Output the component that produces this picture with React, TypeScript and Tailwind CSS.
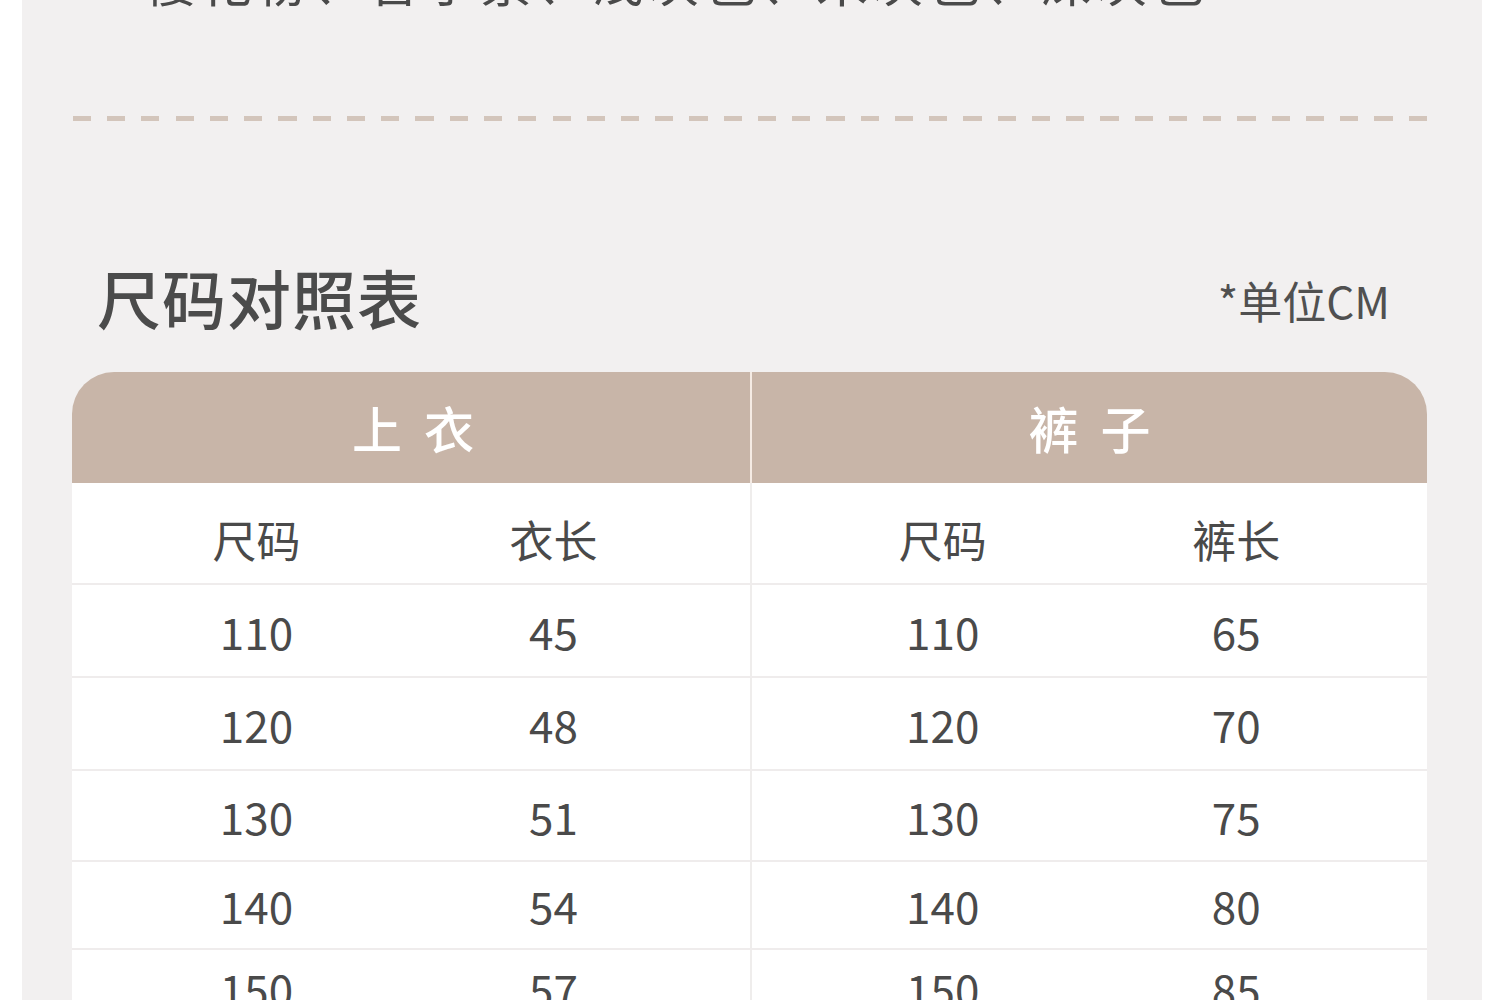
const tops = [
  { size: '110', len: '45' },
  { size: '120', len: '48' },
  { size: '130', len: '51' },
  { size: '140', len: '54' },
  { size: '150', len: '57' },
]
const pants = ['65', '70', '75', '80', '85']
const rowHeights = ['h-[93px]', 'h-[93px]', 'h-[91px]', 'h-[88px]', 'h-[78px]']

const font = { fontFamily: '"Noto Sans CJK SC", "Noto Sans", sans-serif' }

export default function App() {
  return (
    <div className="w-[1500px] h-[1000px] bg-white overflow-hidden" style={font}>
      <div className="mx-[22px] w-[1460px] h-full bg-[#f2f0f0] overflow-hidden">
        {/* cut-off colour line from the section above */}
        <div className="-mt-[50px] pl-[122px] text-[52px] leading-[60px] text-[#4a4a4a] tracking-[4px] whitespace-nowrap">
          樱花粉、香芋紫、浅灰色、米灰色、深灰色
        </div>

        {/* dashed divider */}
        <div className="mt-[106px] ml-[51px] mr-[55px] h-[5px] bg-[repeating-linear-gradient(90deg,#d3c5bb_0_18px,transparent_18px_34.25px)]" />

        {/* title */}
        <div className="mt-[137px] mx-[50px] flex items-end justify-between">
          <div className="pl-[25px] text-[64px] leading-[76px] font-medium text-[#4b4b4b] tracking-[1px]">尺码对照表</div>
          <div className="pr-[42px] pb-[6px] text-[44px] leading-[56px] text-[#505050]">*单位CM</div>
        </div>

        {/* table */}
        <div className="mt-[38px] mx-[50px] w-[1355px]">
          <div className="h-[111px] rounded-t-[42px] bg-[#c8b5a8] grid grid-cols-[680px_1fr]">
            <div className="flex items-center justify-center border-r-2 border-[#f5ebe4] text-white text-[50px] font-medium tracking-[22px] pl-[26px]">上衣</div>
            <div className="flex items-center justify-center text-white text-[50px] font-medium tracking-[22px] pl-[22px]">裤子</div>
          </div>
          <div className="bg-white text-[#4a4a4a] text-[44px]">
            <div className="h-[102px] grid grid-cols-[680px_1fr] border-b-2 border-[#efecec]">
              <div className="grid grid-cols-2 pl-[36px] pr-[48px] pt-[12px] border-r-2 border-[#efedec] items-center text-center">
                <div>尺码</div>
                <div>衣长</div>
              </div>
              <div className="grid grid-cols-2 pl-[44px] pr-[44px] pt-[12px] items-center text-center">
                <div>尺码</div>
                <div>裤长</div>
              </div>
            </div>
            {tops.map((r, i) => (
              <div key={r.size} className={`${rowHeights[i]} grid grid-cols-[680px_1fr] border-b-2 border-[#efecec]`}>
                <div className="grid grid-cols-2 pl-[36px] pr-[48px] border-r-2 border-[#efedec] items-center text-center">
                  <div>{r.size}</div>
                  <div>{r.len}</div>
                </div>
                <div className="grid grid-cols-2 pl-[44px] pr-[44px] items-center text-center">
                  <div>{r.size}</div>
                  <div>{pants[i]}</div>
                </div>
              </div>
            ))}
          </div>
        </div>
      </div>
    </div>
  )
}
